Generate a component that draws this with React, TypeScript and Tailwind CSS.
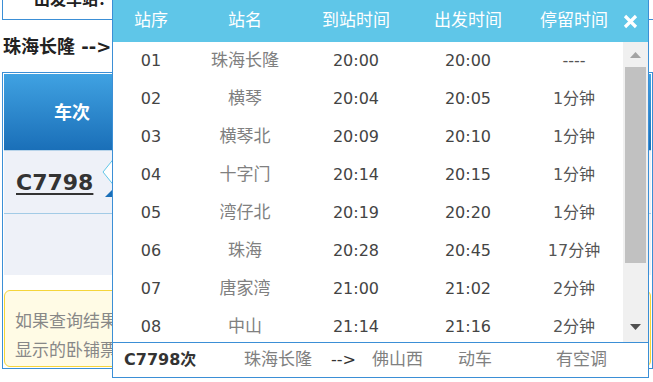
import React from "react";

const stops = [
  { no: "01", name: "珠海长隆", arrive: "20:00", depart: "20:00", stay: "----" },
  { no: "02", name: "横琴", arrive: "20:04", depart: "20:05", stay: "1分钟" },
  { no: "03", name: "横琴北", arrive: "20:09", depart: "20:10", stay: "1分钟" },
  { no: "04", name: "十字门", arrive: "20:14", depart: "20:15", stay: "1分钟" },
  { no: "05", name: "湾仔北", arrive: "20:19", depart: "20:20", stay: "1分钟" },
  { no: "06", name: "珠海", arrive: "20:28", depart: "20:45", stay: "17分钟" },
  { no: "07", name: "唐家湾", arrive: "21:00", depart: "21:02", stay: "2分钟" },
  { no: "08", name: "中山", arrive: "21:14", depart: "21:16", stay: "2分钟" },
];

export default function App() {
  return (
    <div className="relative w-[653px] h-[382px] overflow-hidden bg-white font-['DejaVu_Sans','Noto_Sans_CJK_SC',sans-serif]">
      {/* 背景页面 */}
      <div className="pl-[2px]">
        <div className="h-[20px] border-l border-b border-[#3b8fd6] overflow-hidden">
          <div className="-mt-[10px] pl-[31px] text-[16px] leading-[20px] font-bold text-[#222]">出发车站：佛山西</div>
        </div>
        <div className="h-[52px] flex items-center pl-[1px] text-[18px] font-bold text-[#222]">
          珠海长隆 --&gt; 佛山西
        </div>
        <div className="border border-[#3b8fd6] p-[1px] h-[297px]">
          <div className="h-[77px] flex bg-linear-to-b from-[#40a2e2] to-[#1a6fb8] border-b border-[#b8d4ea]">
            <div className="w-[136px] flex items-center justify-center text-[18px] font-bold text-white">车次</div>
          </div>
          <div className="h-[63px] flex items-center pl-[12px] bg-[#eef1f8] border-b border-[#a2cbe6]">
            <span className="text-[22px] font-bold text-[#333] underline underline-offset-[3px]">C7798</span>
          </div>
          <div className="h-[61px] bg-[#eef1f8]"></div>
          <div className="mt-[15px] h-[77px] rounded-[6px] border border-[#f5d53a] bg-[#fffbe5] pl-[10px] pt-[16px] text-[17px] leading-[29px] text-[#888]">
            <div>如果查询结果中没有您需要的车次</div>
            <div>显示的卧铺票价均为上铺票价</div>
          </div>
        </div>
      </div>

      {/* 气泡箭头 */}
      <svg className="absolute left-[102px] top-[158px]" width="12" height="28" viewBox="0 0 12 28">
        <polygon points="11.5,1 1,14 11.5,27" fill="#fff" stroke="#5fc6e8" strokeWidth="1" />
      </svg>
      <svg className="absolute left-[105px] top-[189px]" width="8" height="8" viewBox="0 0 8 8">
        <polygon points="8,0 8,8 0,8" fill="#1a6fb8" />
      </svg>

      {/* 时刻表弹窗 */}
      <div className="absolute left-[112px] top-[-1px] w-[537px] h-[379px] border border-[#3b8fd6] bg-white flex flex-col">
        <div className="h-[42px] shrink-0 flex items-center bg-[#5fc6e8] text-white text-[17px]">
          <div className="w-[76px] text-center">站序</div>
          <div className="w-[112px] text-center">站名</div>
          <div className="w-[110px] text-center">到站时间</div>
          <div className="w-[114px] text-center">出发时间</div>
          <div className="w-[98px] text-center">停留时间</div>
          <div className="flex-1 flex items-center">
            <svg width="15" height="15" viewBox="0 0 15 15">
              <path d="M2 2 L13 13 M13 2 L2 13" stroke="#fff" strokeWidth="3.2" strokeLinecap="butt" />
            </svg>
          </div>
        </div>

        <div className="h-[300px] shrink-0 flex">
          <div className="flex-1 overflow-hidden">
            {stops.map((s) => (
              <div key={s.no} className="h-[38px] flex items-center text-[16px]">
                <div className="w-[76px] text-center text-[#444]">{s.no}</div>
                <div className="w-[112px] text-center text-[17px] text-[#808080]">{s.name}</div>
                <div className="w-[110px] text-center text-[#444]">{s.arrive}</div>
                <div className="w-[114px] text-center text-[#444]">{s.depart}</div>
                <div className="w-[98px] text-center text-[#555]">{s.stay}</div>
              </div>
            ))}
          </div>
          <div className="w-[25px] bg-[#f0f0f0] flex flex-col">
            <div className="h-[25px] flex items-center justify-center">
              <svg width="11" height="6" viewBox="0 0 11 6">
                <polygon points="5.5,0 11,6 0,6" fill="#a3a3a3" />
              </svg>
            </div>
            <div className="h-[196px] mx-[2px] bg-[#c1c1c1]"></div>
            <div className="flex-1"></div>
            <div className="h-[25px] flex items-center justify-center pb-[5px]">
              <svg width="11" height="6" viewBox="0 0 11 6">
                <polygon points="0,0 11,0 5.5,6" fill="#505050" />
              </svg>
            </div>
          </div>
        </div>

        <div className="flex-1 border-t border-[#3b8fd6] flex items-center pl-[11px] text-[17px]">
          <span className="w-[120px] font-bold text-[#333] text-[16px]">C7798次</span>
          <span className="w-[87px] text-[#808080]">珠海长隆</span>
          <span className="w-[41px] text-[#333] text-[16px]">--&gt;</span>
          <span className="w-[86px] text-[#808080]">佛山西</span>
          <span className="w-[98px] text-[#808080]">动车</span>
          <span className="text-[#808080]">有空调</span>
        </div>
      </div>
    </div>
  );
}
